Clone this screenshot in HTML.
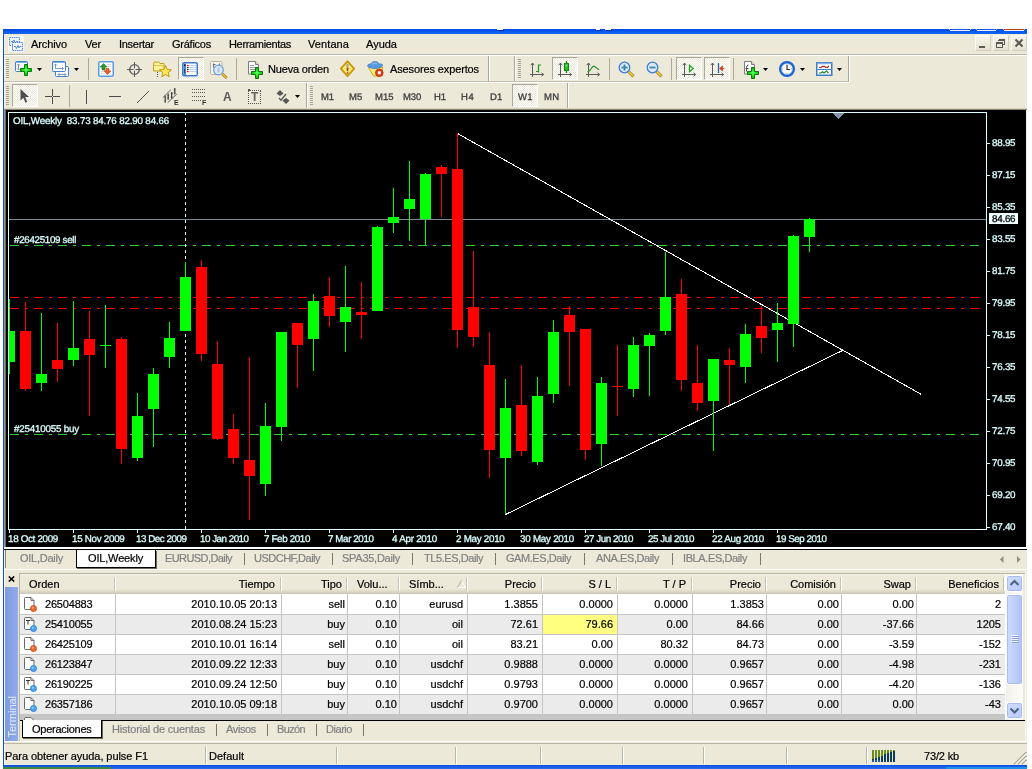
<!DOCTYPE html>
<html><head><meta charset="utf-8"><title>MetaTrader 4</title>
<style>
html,body{margin:0;padding:0;background:#fff;}
body{width:1032px;height:769px;position:relative;overflow:hidden;font-family:"Liberation Sans", sans-serif;}
#w div,#w span.t,#w svg{position:absolute;}
#w span.t{white-space:pre;font-family:"Liberation Sans", sans-serif;}
#w{will-change:transform;position:absolute;left:0;top:0;width:1032px;height:769px;overflow:hidden;}
.chk{background:repeating-conic-gradient(#fff 0 25%,#ece9d8 0 50%) 0 0/2px 2px;}
</style></head><body><div id="w">
<div style="left:3px;top:29px;width:1024px;height:740px;background:#ece9d8;"></div>
<div style="left:3px;top:29px;width:1024px;height:5px;background:linear-gradient(#0048dc,#0a5cf0 60%,#1a66f2);"></div>
<div style="left:950px;top:29px;width:20px;height:1px;background:#1450e8;"></div>
<div style="left:950px;top:30px;width:20px;height:1px;background:#f2f5ff;"></div>
<div style="left:949px;top:29px;width:1px;height:1px;background:#9db8f8;"></div>
<div style="left:970px;top:29px;width:1px;height:1px;background:#9db8f8;"></div>
<div style="left:977px;top:29px;width:19px;height:1px;background:#1450e8;"></div>
<div style="left:977px;top:30px;width:19px;height:1px;background:#f2f5ff;"></div>
<div style="left:976px;top:29px;width:1px;height:1px;background:#9db8f8;"></div>
<div style="left:996px;top:29px;width:1px;height:1px;background:#9db8f8;"></div>
<div style="left:1004px;top:29px;width:20px;height:1px;background:#b8420c;"></div>
<div style="left:1004px;top:30px;width:20px;height:1px;background:#f2f5ff;"></div>
<div style="left:1003px;top:29px;width:1px;height:1px;background:#9db8f8;"></div>
<div style="left:1024px;top:29px;width:1px;height:1px;background:#9db8f8;"></div>
<div style="left:498px;top:30px;width:6px;height:1px;background:#0a2c9c;"></div>
<div style="left:497px;top:29px;width:6px;height:1px;background:#fff;"></div>
<div style="left:597px;top:30px;width:4px;height:1px;background:#0a2c9c;"></div>
<div style="left:596px;top:29px;width:4px;height:1px;background:#fff;"></div>
<div style="left:606px;top:30px;width:6px;height:1px;background:#0a2c9c;"></div>
<div style="left:605px;top:29px;width:6px;height:1px;background:#fff;"></div>
<div style="left:3px;top:29px;width:1px;height:740px;background:#0a50e0;"></div>
<div style="left:4px;top:34px;width:1px;height:535px;background:#f4efdf;"></div>
<svg style="left:8px;top:36px" width="16" height="16" viewBox="0 0 16 16">
<rect width="16" height="16" fill="#fbfaf6"/>
<rect x="1.5" y="1.5" width="10" height="8" fill="#eef4fc" stroke="#4a86d8" stroke-dasharray="1.5 .7"/>
<path d="M3 5.5h2l1-1.5 1 3 1-1.500h2" fill="none" stroke="#5a8fd8" stroke-width="1"/>
<rect x="4.500" y="6.500" width="10" height="8" fill="#f4f8fe" stroke="#4a86d8" stroke-dasharray="1.5 .7"/>
<path d="M6 10.500h1.500l1 2 1.500-3 1 2.500 1-1.500h1.500" fill="none" stroke="#4a86d8" stroke-width="1"/>
</svg>
<span class="t" style="top:38px;font-size:11px;line-height:13px;color:#000;-webkit-text-stroke:0.200px #000;letter-spacing:-0.098px;left:31px;">Archivo</span>
<span class="t" style="top:38px;font-size:11px;line-height:13px;color:#000;-webkit-text-stroke:0.200px #000;letter-spacing:-0.172px;left:85px;">Ver</span>
<span class="t" style="top:38px;font-size:11px;line-height:13px;color:#000;-webkit-text-stroke:0.200px #000;letter-spacing:-0.287px;left:119px;">Insertar</span>
<span class="t" style="top:38px;font-size:11px;line-height:13px;color:#000;-webkit-text-stroke:0.200px #000;letter-spacing:-0.246px;left:172px;">Gráficos</span>
<span class="t" style="top:38px;font-size:11px;line-height:13px;color:#000;-webkit-text-stroke:0.200px #000;letter-spacing:-0.336px;left:229px;">Herramientas</span>
<span class="t" style="top:38px;font-size:11px;line-height:13px;color:#000;-webkit-text-stroke:0.200px #000;letter-spacing:0.089px;left:308px;">Ventana</span>
<span class="t" style="top:38px;font-size:11px;line-height:13px;color:#000;-webkit-text-stroke:0.200px #000;letter-spacing:0.000px;left:366px;">Ayuda</span>
<div style="left:975px;top:35px;width:16px;height:16px;background:linear-gradient(#f6f4ec,#e6e2d2);border:1px solid #fbfaf5;border-right-color:#d2cebc;border-bottom-color:#d2cebc;box-sizing:border-box;"></div>
<div style="left:993px;top:35px;width:16px;height:16px;background:linear-gradient(#f6f4ec,#e6e2d2);border:1px solid #fbfaf5;border-right-color:#d2cebc;border-bottom-color:#d2cebc;box-sizing:border-box;"></div>
<div style="left:1011px;top:35px;width:16px;height:16px;background:linear-gradient(#f6f4ec,#e6e2d2);border:1px solid #fbfaf5;border-right-color:#d2cebc;border-bottom-color:#d2cebc;box-sizing:border-box;"></div>
<div style="left:979px;top:46px;width:6px;height:2px;background:#5a5a52;"></div>
<svg style="left:993px;top:35px" width="16" height="16" viewBox="0 0 16 16" shape-rendering="crispEdges">
<path d="M5.500 4.500h6v5h-2" fill="none" stroke="#5a5a52"/><path d="M5 5.500h7" stroke="#5a5a52"/>
<rect x="3.500" y="7.500" width="6" height="5" fill="none" stroke="#5a5a52"/><path d="M3 8.500h7" stroke="#5a5a52"/></svg>
<svg style="left:1011px;top:35px" width="16" height="16" viewBox="0 0 16 16">
<path d="M4.500 4.500l7 7M11.500 4.500l-7 7" stroke="#5a5a52" stroke-width="2.100" fill="none"/></svg>
<div style="left:4px;top:54px;width:1023px;height:1px;background:#b9b6a5;"></div>
<div style="left:4px;top:55px;width:1023px;height:1px;background:#ffffff;"></div>
<div style="left:4px;top:81px;width:846px;height:1px;background:#c2bfae;"></div>
<div style="left:4px;top:82px;width:846px;height:1px;background:#ffffff;"></div>
<div style="left:6px;top:59px;width:3px;height:1px;background:#a7a392;"></div>
<div style="left:6px;top:61px;width:3px;height:1px;background:#a7a392;"></div>
<div style="left:6px;top:63px;width:3px;height:1px;background:#a7a392;"></div>
<div style="left:6px;top:65px;width:3px;height:1px;background:#a7a392;"></div>
<div style="left:6px;top:67px;width:3px;height:1px;background:#a7a392;"></div>
<div style="left:6px;top:69px;width:3px;height:1px;background:#a7a392;"></div>
<div style="left:6px;top:71px;width:3px;height:1px;background:#a7a392;"></div>
<div style="left:6px;top:73px;width:3px;height:1px;background:#a7a392;"></div>
<div style="left:6px;top:75px;width:3px;height:1px;background:#a7a392;"></div>
<div style="left:6px;top:77px;width:3px;height:1px;background:#a7a392;"></div>
<svg style="left:15px;top:61px" width="14" height="12" viewBox="0 0 14 12"><rect x=".5" y=".5" width="12" height="10" rx="1" fill="#fff" stroke="#3f7fd0"/><path d="M1 1.500h11" stroke="#7fb0ea"/><path d="M3.500 3v6M2 4.500l1.500-1.500 1.500 1.500M2 7.500l1.500 1.500 1.500-1.500" fill="none" stroke="#7f98b8"/></svg>
<svg style="left:20px;top:64px" width="12" height="12" viewBox="0 0 12 12"><defs><radialGradient id="pg" cx="50%" cy="50%" r="55%"><stop offset="0" stop-color="#6aff6a"/><stop offset=".45" stop-color="#22e822"/><stop offset="1" stop-color="#0c9a0c"/></radialGradient></defs><path d="M4.500 .5h3v4h4v3h-4v4h-3v-4h-4v-3h4z" fill="url(#pg)" stroke="#0b7d0b"/></svg>
<svg style="left:37px;top:68px" width="5" height="3" viewBox="0 0 5 3"><path d="M0 0h5L2.500 3z" fill="#000"/></svg>
<svg style="left:52px;top:61px" width="18" height="17" viewBox="0 0 18 17"><rect x=".5" y=".5" width="13" height="10" rx="1" fill="#fff" stroke="#3f7fd0"/><path d="M1 1.500h12" stroke="#7fb0ea"/><rect x="3.500" y="5.500" width="13" height="10" rx="1" fill="#fff" stroke="#3f7fd0"/><rect x=".5" y=".5" width="13" height="10" rx="1" fill="#fff" stroke="#3f7fd0"/><path d="M1 1.500h12" stroke="#7fb0ea"/><path d="M3.500 3v5M2 4.500l1.500-1.500 1.500 1.500M4 7.500h7.500M10 6l1.500 1.500-1.500 1.500" fill="none" stroke="#7f98b8"/><path d="M6 13.500h8M7.500 12l-1.500 1.500 1.500 1.500M12.500 12l1.500 1.500-1.500 1.500" fill="none" stroke="#7f98b8"/></svg>
<svg style="left:74px;top:68px" width="5" height="3" viewBox="0 0 5 3"><path d="M0 0h5L2.500 3z" fill="#000"/></svg>
<div style="left:88px;top:58px;width:1px;height:22px;background:#aca899;"></div>
<svg style="left:98px;top:61px" width="16" height="16" viewBox="0 0 16 16"><rect x=".75" y=".75" width="14.500" height="14.500" rx="1.500" fill="#fff" stroke="#5a9be6" stroke-width="1.500"/><path d="M9 3.500h4M9 5.500h4M3 10.500h4M3 12.500h4" stroke="#dcdcdc"/><path d="M5.500 2.500l3.500 3.500h-2v3h-3v-3h-2z" fill="#2a9a2a" stroke="#1a7a1a" stroke-width=".6"/><path d="M9.500 13.500l-3.500-3.500h2v-2.500h3v2.500h2z" fill="#e85a30" stroke="#c8401a" stroke-width=".6"/></svg>
<svg style="left:127px;top:62px" width="16" height="16" viewBox="0 0 16 16"><circle cx="7.500" cy="7.500" r="4.800" fill="none" stroke="#5c5c5c" stroke-width="1.300"/><path d="M7.500 0v15M0 7.500h15" stroke="#5c5c5c" stroke-width="1"/><rect x="6.500" y="6.500" width="2" height="2" fill="#ece9d8"/></svg>
<svg style="left:153px;top:61px" width="19" height="17" viewBox="0 0 19 17"><path d="M.5 2.500q0-1.500 1.500-1.500h3.500q1 0 1.500 1.500h4v7.500h-10.500z" fill="#fdf29a" stroke="#c89a1a"/><path d="M1 4.500h10" stroke="#e8c44a"/><rect x="4" y="11" width="1" height="1" fill="#555"/><rect x="4" y="13" width="1" height="1" fill="#555"/><rect x="4" y="15" width="1" height="1" fill="#555"/><path d="M12.500 4.500l1.700 4 4.300.3-3.300 2.800 1 4.200-3.700-2.300-3.700 2.300 1-4.200-3.300-2.800 4.300-.3z" fill="#fbe85a" stroke="#c8960f" stroke-width="1"/></svg>
<div class="chk" style="left:178px;top:57px;width:26px;height:23px;box-sizing:border-box;border:1px solid #fff;border-top-color:#aca899;border-left-color:#aca899;"></div>
<svg style="left:182px;top:62px" width="16" height="15" viewBox="0 0 16 15"><rect x=".75" y=".75" width="14.500" height="13" rx="1.500" fill="#fff" stroke="#3c7cc8" stroke-width="1.500"/><rect x="1.500" y="1.500" width="2.500" height="11.500" fill="#4a86d0"/><path d="M2.500 7v4" stroke="#444"/><path d="M6.500 3.500h7.500M6.500 5.500h7.500M6.500 7.500h7.500M6.500 9.500h7.500" stroke="#b8d0f0"/><rect x="2" y="2.500" width="1.500" height="1.500" fill="#000"/><rect x="5" y="3" width="1.500" height="1.200" fill="#f00"/><rect x="5" y="5" width="1.500" height="1.200" fill="#222"/><rect x="5" y="7" width="1.500" height="1.200" fill="#222"/><rect x="5" y="9" width="1.500" height="1.200" fill="#f00"/></svg>
<svg style="left:210px;top:61px" width="19" height="18" viewBox="0 0 19 18"><rect x=".5" y=".5" width="11.500" height="13" rx="1" fill="#f6f4ee" stroke="#b8b4a4"/><path d="M3.500 2.500v4M3.500 3.500h2M9.500 2.500v4M8 4.500h1.500" stroke="#666"/><circle cx="8.500" cy="9" r="4.800" fill="#dfe9fa" fill-opacity=".9" stroke="#6ea0e6" stroke-width="1.300"/><path d="M8.500 6.500v5" stroke="#a8c0e8" stroke-width="2"/><path d="M12.500 13l4.200 4" stroke="#a8780a" stroke-width="2.600"/><path d="M12.500 13l4 3.800" stroke="#e8c83a" stroke-width="1.200"/></svg>
<div style="left:236px;top:58px;width:1px;height:22px;background:#aca899;"></div>
<svg style="left:247px;top:61px" width="13" height="14" viewBox="0 0 13 14"><path d="M1.500 .5h7l3 3v9.500h-10z" fill="#fdfdfd" stroke="#7d7d7d"/><path d="M8.500 .5v3h3" fill="#e8e8e8" stroke="#7d7d7d"/><path d="M3 4.500h4M3 6.500h6M3 8.500h6" stroke="#9a9a9a"/></svg>
<svg style="left:251px;top:67px" width="12" height="12" viewBox="0 0 12 12"><defs><radialGradient id="pg" cx="50%" cy="50%" r="55%"><stop offset="0" stop-color="#6aff6a"/><stop offset=".45" stop-color="#22e822"/><stop offset="1" stop-color="#0c9a0c"/></radialGradient></defs><path d="M4.500 .5h3v4h4v3h-4v4h-3v-4h-4v-3h4z" fill="url(#pg)" stroke="#0b7d0b"/></svg>
<span class="t" style="top:63px;font-size:11px;line-height:13px;color:#000;-webkit-text-stroke:0.200px #000;letter-spacing:-0.182px;left:268px;">Nueva orden</span>
<svg style="left:340px;top:60px" width="16" height="18" viewBox="0 0 16 18"><path d="M7.500 1.300l6.600 7.400-6.600 7.400-6.600-7.400z" fill="#fdf27e" stroke="#c8980c" stroke-width="1.900" stroke-linejoin="round"/><path d="M3.500 8.500h8" stroke="#f0d860"/><path d="M7.500 4v3.500" stroke="#a0a0a0" stroke-width="2"/><path d="M7.500 7.500v3.700" stroke="#a83a1a" stroke-width="1.600"/><rect x="6.700" y="12.200" width="1.600" height="1.500" fill="#a83a1a"/></svg>
<svg style="left:367px;top:61px" width="18" height="17" viewBox="0 0 18 17"><path d="M1.500 6.500l5 8.500h6l3.500-8.500z" fill="#fdf07a" stroke="#d0a420"/><path d="M.8 5.500q-.8-2.500 3-2.500q1.500-3 4.500-2.500q3 .3 3.700 2.500q4-.3 3.700 1.800q-3.500 3-7.500 2.700q-4 .3-7.400-2z" fill="#5a9ae0" stroke="#3a7ac8" stroke-width=".8"/><path d="M5 3.200q2-2 5-.5" stroke="#9cc4f0" fill="none"/><circle cx="12.300" cy="11.800" r="3.800" fill="#e83a10" stroke="#b02a08" stroke-width=".8"/><rect x="10.800" y="10.300" width="3" height="3" fill="#fff"/></svg>
<span class="t" style="top:63px;font-size:11px;line-height:13px;color:#000;-webkit-text-stroke:0.200px #000;letter-spacing:-0.124px;left:390px;">Asesores expertos</span>
<div style="left:488px;top:56px;width:1px;height:25px;background:#aca899;"></div>
<div style="left:489px;top:56px;width:1px;height:25px;background:#fff;"></div>
<div style="left:514px;top:56px;width:1px;height:25px;background:#aca899;"></div>
<div style="left:515px;top:56px;width:1px;height:25px;background:#fff;"></div>
<div style="left:518px;top:59px;width:3px;height:1px;background:#a7a392;"></div>
<div style="left:518px;top:61px;width:3px;height:1px;background:#a7a392;"></div>
<div style="left:518px;top:63px;width:3px;height:1px;background:#a7a392;"></div>
<div style="left:518px;top:65px;width:3px;height:1px;background:#a7a392;"></div>
<div style="left:518px;top:67px;width:3px;height:1px;background:#a7a392;"></div>
<div style="left:518px;top:69px;width:3px;height:1px;background:#a7a392;"></div>
<div style="left:518px;top:71px;width:3px;height:1px;background:#a7a392;"></div>
<div style="left:518px;top:73px;width:3px;height:1px;background:#a7a392;"></div>
<div style="left:518px;top:75px;width:3px;height:1px;background:#a7a392;"></div>
<div style="left:518px;top:77px;width:3px;height:1px;background:#a7a392;"></div>
<svg style="left:530px;top:62px" width="16" height="16" viewBox="0 0 16 16"><path d="M2.500 1v14M0 12.500h13.500" stroke="#5a5a5a" fill="none"/><path d="M.8 3.200l1.700-2.200 1.700 2.200M11.500 10.800l2.200 1.700-2.200 1.700" fill="none" stroke="#5a5a5a"/></svg>
<svg style="left:533px;top:62px" width="12" height="12" viewBox="0 0 12 12"><path d="M5.500 2.500v8M5.500 3h2.500M3 9.500h2.500" stroke="#1a9a1a" stroke-width="1.200" fill="none"/></svg>
<div class="chk" style="left:552px;top:57px;width:26px;height:23px;box-sizing:border-box;border:1px solid #fff;border-top-color:#aca899;border-left-color:#aca899;"></div>
<svg style="left:558px;top:62px" width="16" height="16" viewBox="0 0 16 16"><path d="M2.500 1v14M0 12.500h13.500" stroke="#5a5a5a" fill="none"/><path d="M.8 3.200l1.700-2.200 1.700 2.200M11.500 10.800l2.200 1.700-2.200 1.700" fill="none" stroke="#5a5a5a"/></svg>
<svg style="left:562px;top:60px" width="10" height="14" viewBox="0 0 10 14"><path d="M4.500 1v12" stroke="#0f8c0f" stroke-width="1.200"/><rect x="2.500" y="3.500" width="4" height="7" fill="#22c022" stroke="#0f8c0f"/><rect x="3.500" y="4.500" width="2" height="2" fill="#8ad08a"/></svg>
<svg style="left:586px;top:62px" width="16" height="16" viewBox="0 0 16 16"><path d="M2.500 1v14M0 12.500h13.500" stroke="#5a5a5a" fill="none"/><path d="M.8 3.200l1.700-2.200 1.700 2.200M11.500 10.800l2.200 1.700-2.200 1.700" fill="none" stroke="#5a5a5a"/></svg>
<svg style="left:587px;top:62px" width="14" height="12" viewBox="0 0 14 12"><path d="M.5 10q3-1.500 4.500-4.500q1.500-2 3-.8l4 3" stroke="#2a9a2a" stroke-width="1.300" fill="none"/></svg>
<div style="left:609px;top:58px;width:1px;height:22px;background:#aca899;"></div>
<svg style="left:618px;top:61px" width="17" height="17" viewBox="0 0 17 17"><path d="M10.500 10.500l5 4.800" stroke="#a8780a" stroke-width="3"/><path d="M10.500 10.500l4.700 4.500" stroke="#f0d84a" stroke-width="1.500"/><circle cx="6.500" cy="6.500" r="5.300" fill="#dde9fa" stroke="#3a7cda" stroke-width="1.300"/><path d="M3.500 6.500h6" stroke="#3a86a8" stroke-width="1.800"/><path d="M6.500 3.500v6" stroke="#3a86a8" stroke-width="1.800"/></svg>
<svg style="left:646px;top:61px" width="17" height="17" viewBox="0 0 17 17"><path d="M10.500 10.500l5 4.800" stroke="#a8780a" stroke-width="3"/><path d="M10.500 10.500l4.700 4.500" stroke="#f0d84a" stroke-width="1.500"/><circle cx="6.500" cy="6.500" r="5.300" fill="#dde9fa" stroke="#3a7cda" stroke-width="1.300"/><path d="M3.500 6.500h6" stroke="#3a86a8" stroke-width="1.800"/></svg>
<div style="left:671px;top:58px;width:1px;height:22px;background:#aca899;"></div>
<div class="chk" style="left:676px;top:57px;width:26px;height:23px;box-sizing:border-box;border:1px solid #fff;border-top-color:#aca899;border-left-color:#aca899;"></div>
<svg style="left:682px;top:62px" width="16" height="16" viewBox="0 0 16 16"><path d="M2.500 1v14M0 12.500h13.500" stroke="#5a5a5a" fill="none"/><path d="M.8 3.200l1.700-2.200 1.700 2.200M11.500 10.800l2.200 1.700-2.200 1.700" fill="none" stroke="#5a5a5a"/></svg>
<svg style="left:688px;top:64px" width="7" height="9" viewBox="0 0 7 9"><path d="M1.500 1.200l3.800 3.300-3.800 3.300z" fill="none" stroke="#1aa81a" stroke-width="1.200"/></svg>
<div class="chk" style="left:704px;top:57px;width:26px;height:23px;box-sizing:border-box;border:1px solid #fff;border-top-color:#aca899;border-left-color:#aca899;"></div>
<svg style="left:710px;top:62px" width="16" height="16" viewBox="0 0 16 16"><path d="M2.500 1v14M0 12.500h13.500" stroke="#5a5a5a" fill="none"/><path d="M.8 3.200l1.700-2.200 1.700 2.200M11.500 10.800l2.200 1.700-2.200 1.700" fill="none" stroke="#5a5a5a"/></svg>
<svg style="left:717px;top:62px" width="9" height="12" viewBox="0 0 9 12"><path d="M1.500 1v10" stroke="#1a6aa8" stroke-width="1.300"/><path d="M2.500 6.500h5M5.500 4l-2.800 2.500 2.800 2.500z" stroke="#d8401a" fill="#d8401a" stroke-width=".8"/></svg>
<div style="left:733px;top:58px;width:1px;height:22px;background:#aca899;"></div>
<svg style="left:743px;top:61px" width="13" height="14" viewBox="0 0 13 14"><path d="M1.500 .5h7l3 3v9.500h-10z" fill="#fdfdfd" stroke="#7d7d7d"/><path d="M8.500 .5v3h3" fill="#e8e8e8" stroke="#7d7d7d"/><path d="M5.500 4q-2 0-2 2.500v4M2.500 7.500h3" stroke="#444" fill="none"/></svg>
<svg style="left:747px;top:67px" width="12" height="12" viewBox="0 0 12 12"><defs><radialGradient id="pg" cx="50%" cy="50%" r="55%"><stop offset="0" stop-color="#6aff6a"/><stop offset=".45" stop-color="#22e822"/><stop offset="1" stop-color="#0c9a0c"/></radialGradient></defs><path d="M4.500 .5h3v4h4v3h-4v4h-3v-4h-4v-3h4z" fill="url(#pg)" stroke="#0b7d0b"/></svg>
<svg style="left:763px;top:68px" width="5" height="3" viewBox="0 0 5 3"><path d="M0 0h5L2.500 3z" fill="#000"/></svg>
<svg style="left:779px;top:61px" width="16" height="16" viewBox="0 0 16 16"><circle cx="8" cy="8" r="6.800" fill="#fbfbfb" stroke="#1a62d2" stroke-width="2.400"/><circle cx="8" cy="8" r="5.600" fill="none" stroke="#7fb0f0" stroke-width=".6"/><path d="M8 4v4.500h3" stroke="#333" stroke-width="1.200" fill="none"/><path d="M8 3v.8M8 12.200v.8M3 8h.8M12.200 8h.8" stroke="#888"/></svg>
<svg style="left:800px;top:68px" width="5" height="3" viewBox="0 0 5 3"><path d="M0 0h5L2.500 3z" fill="#000"/></svg>
<svg style="left:816px;top:62px" width="17" height="14" viewBox="0 0 17 14"><rect x=".75" y=".75" width="15" height="12.500" fill="#fff" stroke="#3c7cc8" stroke-width="1.500"/><path d="M1 1.500h14.500" stroke="#7fb0ea" stroke-width="1.500"/><path d="M1.500 7.500h14" stroke="#3c7cc8"/><path d="M3 5.500h2l1.500-1.200h2l1 1h2l1.500-1.300" stroke="#b02a1a" stroke-width="1.200" fill="none"/><path d="M3 11h2l1.500-1.200 1.500 1.200 2.500-2 2 2" stroke="#1a8a2a" stroke-width="1.200" fill="none"/></svg>
<svg style="left:837px;top:68px" width="5" height="3" viewBox="0 0 5 3"><path d="M0 0h5L2.500 3z" fill="#000"/></svg>
<div style="left:848px;top:56px;width:1px;height:26px;background:#aca899;"></div>
<div style="left:849px;top:56px;width:1px;height:27px;background:#fff;"></div>
<div style="left:6px;top:86px;width:3px;height:1px;background:#a7a392;"></div>
<div style="left:6px;top:88px;width:3px;height:1px;background:#a7a392;"></div>
<div style="left:6px;top:90px;width:3px;height:1px;background:#a7a392;"></div>
<div style="left:6px;top:92px;width:3px;height:1px;background:#a7a392;"></div>
<div style="left:6px;top:94px;width:3px;height:1px;background:#a7a392;"></div>
<div style="left:6px;top:96px;width:3px;height:1px;background:#a7a392;"></div>
<div style="left:6px;top:98px;width:3px;height:1px;background:#a7a392;"></div>
<div style="left:6px;top:100px;width:3px;height:1px;background:#a7a392;"></div>
<div style="left:6px;top:102px;width:3px;height:1px;background:#a7a392;"></div>
<div style="left:6px;top:104px;width:3px;height:1px;background:#a7a392;"></div>
<div class="chk" style="left:12px;top:84px;width:26px;height:23px;box-sizing:border-box;border:1px solid #fff;border-top-color:#aca899;border-left-color:#aca899;"></div>
<svg style="left:19px;top:88px" width="11" height="16" viewBox="0 0 11 16"><path d="M1.500 1v11.500l2.800-2.800 2.200 5 1.800-.8-2.200-4.900h3.900z" fill="#4d4d4d"/></svg>
<div style="left:45px;top:96px;width:15px;height:1px;background:#4d4d4d;"></div>
<div style="left:52px;top:89px;width:1px;height:15px;background:#4d4d4d;"></div>
<div style="left:52px;top:96px;width:1px;height:1px;background:#ece9d8;"></div>
<div style="left:69px;top:85px;width:1px;height:22px;background:#aca899;"></div>
<div style="left:86px;top:90px;width:1px;height:14px;background:#4d4d4d;"></div>
<div style="left:109px;top:96px;width:12px;height:1px;background:#4d4d4d;"></div>
<svg style="left:136px;top:90px" width="14" height="14" viewBox="0 0 14 14"><path d="M1 13l12-12" stroke="#4d4d4d" stroke-width="1"/></svg>
<svg style="left:162px;top:88px" width="17" height="18" viewBox="0 0 17 18"><path d="M.8 9.600l8.100-7.900M5.700 14.700l9.200-8.700" stroke="#6a6a6a" stroke-width="1"/><path d="M3.200 7.400v7.300M6.200 5.500v6.200M9.700 3.900v6.800M12.700 0v6.600" stroke="#444" stroke-width="1.300"/><path d="M2.200 9h2M2.200 12.500h2M5.200 7.500h2M5.200 10h2M8.700 5.500h2M8.700 9h2M11.700 2h2M11.700 5h2" stroke="#555" stroke-width=".8"/></svg>
<span class="t" style="top:98px;font-size:7px;line-height:9px;color:#333;font-weight:bold;left:174px;">E</span>
<div style="left:192px;top:89px;width:13px;height:1px;background:repeating-linear-gradient(90deg,#555 0 1px,transparent 1px 2px);"></div>
<div style="left:192px;top:92px;width:13px;height:1px;background:repeating-linear-gradient(90deg,#555 0 1px,transparent 1px 2px);"></div>
<div style="left:192px;top:96px;width:13px;height:1px;background:repeating-linear-gradient(90deg,#555 0 1px,transparent 1px 2px);"></div>
<div style="left:192px;top:100px;width:9px;height:1px;background:repeating-linear-gradient(90deg,#555 0 1px,transparent 1px 2px);"></div>
<span class="t" style="top:98px;font-size:7px;line-height:9px;color:#333;font-weight:bold;left:202px;">F</span>
<span class="t" style="top:90px;font-size:12px;line-height:14px;color:#5a5a5a;font-weight:bold;left:223px;">A</span>
<div style="left:248px;top:90px;width:13px;height:14px;box-sizing:border-box;border:1px dotted #555;"></div>
<span class="t" style="top:90px;font-size:12px;line-height:14px;color:#666;font-weight:bold;left:251px;">T</span>
<div style="left:248px;top:89px;width:2px;height:2px;background:#555;"></div>
<svg style="left:275px;top:89px" width="16" height="16" viewBox="0 0 16 16"><path d="M5 1l3.500 3.500-3.500 2.500-3.500-2.500z" fill="#555"/><path d="M11 9l3.500 2.500-3.500 3.500-3.500-3.500z" fill="#555"/><path d="M4 9l2 2.200 5-6.200" stroke="#555" stroke-width="1.300" fill="none"/></svg>
<svg style="left:295px;top:95px" width="5" height="3" viewBox="0 0 5 3"><path d="M0 0h5L2.500 3z" fill="#000"/></svg>
<div style="left:306px;top:83px;width:1px;height:25px;background:#aca899;"></div>
<div style="left:307px;top:83px;width:1px;height:25px;background:#fff;"></div>
<div style="left:310px;top:86px;width:3px;height:1px;background:#a7a392;"></div>
<div style="left:310px;top:88px;width:3px;height:1px;background:#a7a392;"></div>
<div style="left:310px;top:90px;width:3px;height:1px;background:#a7a392;"></div>
<div style="left:310px;top:92px;width:3px;height:1px;background:#a7a392;"></div>
<div style="left:310px;top:94px;width:3px;height:1px;background:#a7a392;"></div>
<div style="left:310px;top:96px;width:3px;height:1px;background:#a7a392;"></div>
<div style="left:310px;top:98px;width:3px;height:1px;background:#a7a392;"></div>
<div style="left:310px;top:100px;width:3px;height:1px;background:#a7a392;"></div>
<div style="left:310px;top:102px;width:3px;height:1px;background:#a7a392;"></div>
<div style="left:310px;top:104px;width:3px;height:1px;background:#a7a392;"></div>
<span class="t" style="top:92px;font-size:9.5px;line-height:11.5px;color:#3c3c3c;text-rendering:geometricPrecision;-webkit-text-stroke:0.3px #3c3c3c;letter-spacing:-0.102px;left:321px;">M1</span>
<span class="t" style="top:92px;font-size:9.5px;line-height:11.5px;color:#3c3c3c;text-rendering:geometricPrecision;-webkit-text-stroke:0.3px #3c3c3c;letter-spacing:0.148px;left:349px;">M5</span>
<span class="t" style="top:92px;font-size:9.5px;line-height:11.5px;color:#3c3c3c;text-rendering:geometricPrecision;-webkit-text-stroke:0.3px #3c3c3c;letter-spacing:0.005px;left:375px;">M15</span>
<span class="t" style="top:92px;font-size:9.5px;line-height:11.5px;color:#3c3c3c;text-rendering:geometricPrecision;-webkit-text-stroke:0.3px #3c3c3c;letter-spacing:-0.161px;left:403px;">M30</span>
<span class="t" style="top:92px;font-size:9.5px;line-height:11.5px;color:#3c3c3c;text-rendering:geometricPrecision;-webkit-text-stroke:0.3px #3c3c3c;letter-spacing:-0.078px;left:434px;">H1</span>
<span class="t" style="top:92px;font-size:9.5px;line-height:11.5px;color:#3c3c3c;text-rendering:geometricPrecision;-webkit-text-stroke:0.3px #3c3c3c;letter-spacing:0.572px;left:461px;">H4</span>
<span class="t" style="top:92px;font-size:9.5px;line-height:11.5px;color:#3c3c3c;text-rendering:geometricPrecision;-webkit-text-stroke:0.3px #3c3c3c;letter-spacing:0.022px;left:490px;">D1</span>
<div class="chk" style="left:512px;top:84px;width:26px;height:23px;box-sizing:border-box;border:1px solid #fff;border-top-color:#aca899;border-left-color:#aca899;"></div>
<span class="t" style="top:92px;font-size:9.5px;line-height:11.5px;color:#3c3c3c;text-rendering:geometricPrecision;-webkit-text-stroke:0.3px #3c3c3c;letter-spacing:0.375px;left:518px;">W1</span>
<span class="t" style="top:92px;font-size:9.5px;line-height:11.5px;color:#3c3c3c;text-rendering:geometricPrecision;-webkit-text-stroke:0.3px #3c3c3c;letter-spacing:0.259px;left:544px;">MN</span>
<div style="left:567px;top:83px;width:1px;height:25px;background:#aca899;"></div>
<div style="left:568px;top:83px;width:1px;height:25px;background:#fff;"></div>
<div style="left:4px;top:108px;width:1023px;height:1px;background:#d8d4c2;"></div>
<div style="left:4px;top:109px;width:1023px;height:1px;background:#8a8672;"></div>
<div style="left:4px;top:110px;width:1px;height:437px;background:#9c9884;"></div>
<div style="left:5px;top:110px;width:1px;height:437px;background:#6e6a5c;"></div>
<div style="left:6px;top:110px;width:1020px;height:437px;background:#000;"></div>
<div style="left:1026px;top:110px;width:1px;height:437px;background:#f4f2e8;"></div>
<svg style="left:0;top:0" width="1032" height="769" viewBox="0 0 1032 769" shape-rendering="crispEdges"><rect x="9" y="219" width="977" height="1" fill="#778899"/><path d="M10 245.5H979" stroke="#32cd32" stroke-width="1" stroke-dasharray="9 6 3 6" fill="none"/><path d="M10 434.5H979" stroke="#32cd32" stroke-width="1" stroke-dasharray="9 6 3 6" fill="none"/><path d="M10 297.5H979" stroke="#ff0000" stroke-width="1" stroke-dasharray="9 6 3 6" fill="none"/><path d="M10 308.5H979" stroke="#ff0000" stroke-width="1" stroke-dasharray="9 6 3 6" fill="none"/><path d="M185.500 112V529" stroke="#dcffff" stroke-width="1" stroke-dasharray="3 3" fill="none"/><path d="M457.500 133.500L921.500 394.500" stroke="#fff" stroke-width="1" fill="none"/><path d="M505.500 514.500L842.500 350.500" stroke="#fff" stroke-width="1" fill="none"/><rect x="9" y="299" width="1" height="75" fill="#00ff00"/><rect x="9" y="331" width="6" height="31" fill="#00ff00"/><rect x="25" y="302" width="1" height="89" fill="#ff0000"/><rect x="20" y="331" width="11" height="58" fill="#ff0000"/><rect x="41" y="313" width="1" height="78" fill="#00ff00"/><rect x="36" y="374" width="11" height="9" fill="#00ff00"/><rect x="57" y="323" width="1" height="59" fill="#ff0000"/><rect x="52" y="360" width="11" height="9" fill="#ff0000"/><rect x="73" y="301" width="1" height="65" fill="#00ff00"/><rect x="68" y="348" width="11" height="12" fill="#00ff00"/><rect x="89" y="311" width="1" height="105" fill="#ff0000"/><rect x="84" y="339" width="11" height="16" fill="#ff0000"/><rect x="105" y="305" width="1" height="63" fill="#00ff00"/><rect x="100" y="345" width="11" height="1" fill="#00ff00"/><rect x="121" y="337" width="1" height="127" fill="#ff0000"/><rect x="116" y="339" width="11" height="110" fill="#ff0000"/><rect x="137" y="393" width="1" height="68" fill="#00ff00"/><rect x="132" y="416" width="11" height="42" fill="#00ff00"/><rect x="153" y="368" width="1" height="79" fill="#00ff00"/><rect x="148" y="374" width="11" height="35" fill="#00ff00"/><rect x="169" y="322" width="1" height="46" fill="#00ff00"/><rect x="164" y="338" width="11" height="19" fill="#00ff00"/><rect x="185" y="262" width="1" height="69" fill="#00ff00"/><rect x="180" y="277" width="11" height="54" fill="#00ff00"/><rect x="201" y="260" width="1" height="101" fill="#ff0000"/><rect x="196" y="267" width="11" height="87" fill="#ff0000"/><rect x="217" y="341" width="1" height="99" fill="#ff0000"/><rect x="212" y="364" width="11" height="75" fill="#ff0000"/><rect x="233" y="414" width="1" height="50" fill="#ff0000"/><rect x="228" y="429" width="11" height="29" fill="#ff0000"/><rect x="249" y="357" width="1" height="163" fill="#ff0000"/><rect x="244" y="460" width="11" height="16" fill="#ff0000"/><rect x="265" y="403" width="1" height="93" fill="#00ff00"/><rect x="260" y="426" width="11" height="58" fill="#00ff00"/><rect x="281" y="332" width="1" height="109" fill="#00ff00"/><rect x="276" y="332" width="11" height="95" fill="#00ff00"/><rect x="297" y="323" width="1" height="65" fill="#ff0000"/><rect x="292" y="323" width="11" height="22" fill="#ff0000"/><rect x="313" y="294" width="1" height="77" fill="#00ff00"/><rect x="308" y="301" width="11" height="38" fill="#00ff00"/><rect x="329" y="277" width="1" height="50" fill="#ff0000"/><rect x="324" y="296" width="11" height="20" fill="#ff0000"/><rect x="345" y="266" width="1" height="86" fill="#00ff00"/><rect x="340" y="307" width="11" height="15" fill="#00ff00"/><rect x="361" y="282" width="1" height="57" fill="#ff0000"/><rect x="356" y="312" width="11" height="3" fill="#ff0000"/><rect x="377" y="226" width="1" height="85" fill="#00ff00"/><rect x="372" y="227" width="11" height="84" fill="#00ff00"/><rect x="393" y="188" width="1" height="45" fill="#00ff00"/><rect x="388" y="217" width="11" height="6" fill="#00ff00"/><rect x="409" y="161" width="1" height="80" fill="#00ff00"/><rect x="404" y="199" width="11" height="10" fill="#00ff00"/><rect x="425" y="173" width="1" height="72" fill="#00ff00"/><rect x="420" y="174" width="11" height="45" fill="#00ff00"/><rect x="441" y="165" width="1" height="52" fill="#ff0000"/><rect x="436" y="167" width="11" height="7" fill="#ff0000"/><rect x="457" y="133" width="1" height="215" fill="#ff0000"/><rect x="452" y="169" width="11" height="161" fill="#ff0000"/><rect x="473" y="251" width="1" height="96" fill="#ff0000"/><rect x="468" y="307" width="11" height="30" fill="#ff0000"/><rect x="489" y="332" width="1" height="146" fill="#ff0000"/><rect x="484" y="365" width="11" height="85" fill="#ff0000"/><rect x="505" y="379" width="1" height="135" fill="#00ff00"/><rect x="500" y="408" width="11" height="50" fill="#00ff00"/><rect x="521" y="365" width="1" height="91" fill="#ff0000"/><rect x="516" y="405" width="11" height="46" fill="#ff0000"/><rect x="537" y="377" width="1" height="88" fill="#00ff00"/><rect x="532" y="396" width="11" height="66" fill="#00ff00"/><rect x="553" y="320" width="1" height="83" fill="#00ff00"/><rect x="548" y="332" width="11" height="62" fill="#00ff00"/><rect x="569" y="306" width="1" height="80" fill="#ff0000"/><rect x="564" y="315" width="11" height="17" fill="#ff0000"/><rect x="585" y="329" width="1" height="131" fill="#ff0000"/><rect x="580" y="329" width="11" height="121" fill="#ff0000"/><rect x="601" y="377" width="1" height="89" fill="#00ff00"/><rect x="596" y="383" width="11" height="61" fill="#00ff00"/><rect x="617" y="345" width="1" height="71" fill="#ff0000"/><rect x="612" y="386" width="11" height="1" fill="#ff0000"/><rect x="633" y="337" width="1" height="60" fill="#00ff00"/><rect x="628" y="345" width="11" height="44" fill="#00ff00"/><rect x="649" y="333" width="1" height="63" fill="#00ff00"/><rect x="644" y="335" width="11" height="11" fill="#00ff00"/><rect x="665" y="252" width="1" height="83" fill="#00ff00"/><rect x="660" y="297" width="11" height="34" fill="#00ff00"/><rect x="681" y="279" width="1" height="112" fill="#ff0000"/><rect x="676" y="294" width="11" height="86" fill="#ff0000"/><rect x="697" y="345" width="1" height="66" fill="#ff0000"/><rect x="692" y="383" width="11" height="20" fill="#ff0000"/><rect x="713" y="359" width="1" height="92" fill="#00ff00"/><rect x="708" y="359" width="11" height="42" fill="#00ff00"/><rect x="729" y="348" width="1" height="57" fill="#ff0000"/><rect x="724" y="360" width="11" height="5" fill="#ff0000"/><rect x="745" y="324" width="1" height="59" fill="#00ff00"/><rect x="740" y="334" width="11" height="33" fill="#00ff00"/><rect x="761" y="306" width="1" height="47" fill="#ff0000"/><rect x="756" y="326" width="11" height="12" fill="#ff0000"/><rect x="777" y="303" width="1" height="59" fill="#00ff00"/><rect x="772" y="323" width="11" height="7" fill="#00ff00"/><rect x="793" y="235" width="1" height="112" fill="#00ff00"/><rect x="788" y="236" width="11" height="88" fill="#00ff00"/><rect x="809" y="218" width="1" height="34" fill="#00ff00"/><rect x="804" y="219" width="11" height="18" fill="#00ff00"/><path d="M8.500 112.500H986.500V529.500H8.500z" stroke="#dcffff" fill="none"/><path d="M833 113h11l-5.500 6z" fill="#8492ae"/><rect x="987" y="143" width="3" height="1" fill="#dcffff"/><rect x="987" y="175" width="3" height="1" fill="#dcffff"/><rect x="987" y="207" width="3" height="1" fill="#dcffff"/><rect x="987" y="239" width="3" height="1" fill="#dcffff"/><rect x="987" y="271" width="3" height="1" fill="#dcffff"/><rect x="987" y="303" width="3" height="1" fill="#dcffff"/><rect x="987" y="335" width="3" height="1" fill="#dcffff"/><rect x="987" y="367" width="3" height="1" fill="#dcffff"/><rect x="987" y="399" width="3" height="1" fill="#dcffff"/><rect x="987" y="431" width="3" height="1" fill="#dcffff"/><rect x="987" y="463" width="3" height="1" fill="#dcffff"/><rect x="987" y="495" width="3" height="1" fill="#dcffff"/><rect x="987" y="527" width="3" height="1" fill="#dcffff"/><rect x="9" y="530" width="1" height="3" fill="#dcffff"/><rect x="73" y="530" width="1" height="3" fill="#dcffff"/><rect x="137" y="530" width="1" height="3" fill="#dcffff"/><rect x="201" y="530" width="1" height="3" fill="#dcffff"/><rect x="265" y="530" width="1" height="3" fill="#dcffff"/><rect x="329" y="530" width="1" height="3" fill="#dcffff"/><rect x="393" y="530" width="1" height="3" fill="#dcffff"/><rect x="457" y="530" width="1" height="3" fill="#dcffff"/><rect x="521" y="530" width="1" height="3" fill="#dcffff"/><rect x="585" y="530" width="1" height="3" fill="#dcffff"/><rect x="649" y="530" width="1" height="3" fill="#dcffff"/><rect x="713" y="530" width="1" height="3" fill="#dcffff"/><rect x="777" y="530" width="1" height="3" fill="#dcffff"/><rect x="989" y="213" width="29" height="11" fill="#f0ffff"/></svg>
<span class="t" style="top:116px;font-size:9.8px;line-height:11.8px;color:#dcffff;text-rendering:geometricPrecision;-webkit-text-stroke:0.3px #dcffff;letter-spacing:-0.175px;left:13px;">OIL,Weekly  83.73 84.76 82.90 84.66</span>
<span class="t" style="top:235px;font-size:9.8px;line-height:11.8px;color:#dcffff;text-rendering:geometricPrecision;-webkit-text-stroke:0.3px #dcffff;letter-spacing:-0.319px;left:14px;">#26425109 sell</span>
<span class="t" style="top:424px;font-size:9.8px;line-height:11.8px;color:#dcffff;text-rendering:geometricPrecision;-webkit-text-stroke:0.3px #dcffff;letter-spacing:-0.197px;left:14px;">#25410055 buy</span>
<span class="t" style="top:138px;font-size:9.8px;line-height:11.8px;color:#dcffff;text-rendering:geometricPrecision;-webkit-text-stroke:0.3px #dcffff;letter-spacing:-0.246px;left:992px;">88.95</span>
<span class="t" style="top:170px;font-size:9.8px;line-height:11.8px;color:#dcffff;text-rendering:geometricPrecision;-webkit-text-stroke:0.3px #dcffff;letter-spacing:-0.246px;left:992px;">87.15</span>
<span class="t" style="top:202px;font-size:9.8px;line-height:11.8px;color:#dcffff;text-rendering:geometricPrecision;-webkit-text-stroke:0.3px #dcffff;letter-spacing:-0.246px;left:992px;">85.35</span>
<span class="t" style="top:234px;font-size:9.8px;line-height:11.8px;color:#dcffff;text-rendering:geometricPrecision;-webkit-text-stroke:0.3px #dcffff;letter-spacing:-0.246px;left:992px;">83.55</span>
<span class="t" style="top:266px;font-size:9.8px;line-height:11.8px;color:#dcffff;text-rendering:geometricPrecision;-webkit-text-stroke:0.3px #dcffff;letter-spacing:-0.246px;left:992px;">81.75</span>
<span class="t" style="top:298px;font-size:9.8px;line-height:11.8px;color:#dcffff;text-rendering:geometricPrecision;-webkit-text-stroke:0.3px #dcffff;letter-spacing:-0.246px;left:992px;">79.95</span>
<span class="t" style="top:330px;font-size:9.8px;line-height:11.8px;color:#dcffff;text-rendering:geometricPrecision;-webkit-text-stroke:0.3px #dcffff;letter-spacing:-0.246px;left:992px;">78.15</span>
<span class="t" style="top:362px;font-size:9.8px;line-height:11.8px;color:#dcffff;text-rendering:geometricPrecision;-webkit-text-stroke:0.3px #dcffff;letter-spacing:-0.246px;left:992px;">76.35</span>
<span class="t" style="top:394px;font-size:9.8px;line-height:11.8px;color:#dcffff;text-rendering:geometricPrecision;-webkit-text-stroke:0.3px #dcffff;letter-spacing:-0.246px;left:992px;">74.55</span>
<span class="t" style="top:426px;font-size:9.8px;line-height:11.8px;color:#dcffff;text-rendering:geometricPrecision;-webkit-text-stroke:0.3px #dcffff;letter-spacing:-0.246px;left:992px;">72.75</span>
<span class="t" style="top:458px;font-size:9.8px;line-height:11.8px;color:#dcffff;text-rendering:geometricPrecision;-webkit-text-stroke:0.3px #dcffff;letter-spacing:-0.246px;left:992px;">70.95</span>
<span class="t" style="top:490px;font-size:9.8px;line-height:11.8px;color:#dcffff;text-rendering:geometricPrecision;-webkit-text-stroke:0.3px #dcffff;letter-spacing:-0.246px;left:992px;">69.20</span>
<span class="t" style="top:522px;font-size:9.8px;line-height:11.8px;color:#dcffff;text-rendering:geometricPrecision;-webkit-text-stroke:0.3px #dcffff;letter-spacing:-0.246px;left:992px;">67.40</span>
<span class="t" style="top:214px;font-size:9.8px;line-height:11.8px;color:#000;text-rendering:geometricPrecision;-webkit-text-stroke:0.3px #000;letter-spacing:-0.246px;left:992px;">84.66</span>
<span class="t" style="top:534px;font-size:9.8px;line-height:11.8px;color:#dcffff;text-rendering:geometricPrecision;-webkit-text-stroke:0.3px #dcffff;letter-spacing:-0.308px;left:8px;">18 Oct 2009</span>
<span class="t" style="top:534px;font-size:9.8px;line-height:11.8px;color:#dcffff;text-rendering:geometricPrecision;-webkit-text-stroke:0.3px #dcffff;letter-spacing:-0.278px;left:72px;">15 Nov 2009</span>
<span class="t" style="top:534px;font-size:9.8px;line-height:11.8px;color:#dcffff;text-rendering:geometricPrecision;-webkit-text-stroke:0.3px #dcffff;letter-spacing:-0.460px;left:136px;">13 Dec 2009</span>
<span class="t" style="top:534px;font-size:9.8px;line-height:11.8px;color:#dcffff;text-rendering:geometricPrecision;-webkit-text-stroke:0.3px #dcffff;letter-spacing:-0.494px;left:200px;">10 Jan 2010</span>
<span class="t" style="top:534px;font-size:9.8px;line-height:11.8px;color:#dcffff;text-rendering:geometricPrecision;-webkit-text-stroke:0.3px #dcffff;letter-spacing:-0.358px;left:264px;">7 Feb 2010</span>
<span class="t" style="top:534px;font-size:9.8px;line-height:11.8px;color:#dcffff;text-rendering:geometricPrecision;-webkit-text-stroke:0.3px #dcffff;letter-spacing:-0.406px;left:328px;">7 Mar 2010</span>
<span class="t" style="top:534px;font-size:9.8px;line-height:11.8px;color:#dcffff;text-rendering:geometricPrecision;-webkit-text-stroke:0.3px #dcffff;letter-spacing:-0.241px;left:392px;">4 Apr 2010</span>
<span class="t" style="top:534px;font-size:9.8px;line-height:11.8px;color:#dcffff;text-rendering:geometricPrecision;-webkit-text-stroke:0.3px #dcffff;letter-spacing:-0.270px;left:456px;">2 May 2010</span>
<span class="t" style="top:534px;font-size:9.8px;line-height:11.8px;color:#dcffff;text-rendering:geometricPrecision;-webkit-text-stroke:0.3px #dcffff;letter-spacing:-0.241px;left:520px;">30 May 2010</span>
<span class="t" style="top:534px;font-size:9.8px;line-height:11.8px;color:#dcffff;text-rendering:geometricPrecision;-webkit-text-stroke:0.3px #dcffff;letter-spacing:-0.449px;left:584px;">27 Jun 2010</span>
<span class="t" style="top:534px;font-size:9.8px;line-height:11.8px;color:#dcffff;text-rendering:geometricPrecision;-webkit-text-stroke:0.3px #dcffff;letter-spacing:-0.425px;left:648px;">25 Jul 2010</span>
<span class="t" style="top:534px;font-size:9.8px;line-height:11.8px;color:#dcffff;text-rendering:geometricPrecision;-webkit-text-stroke:0.3px #dcffff;letter-spacing:-0.276px;left:712px;">22 Aug 2010</span>
<span class="t" style="top:534px;font-size:9.8px;line-height:11.8px;color:#dcffff;text-rendering:geometricPrecision;-webkit-text-stroke:0.3px #dcffff;letter-spacing:-0.462px;left:776px;">19 Sep 2010</span>
<div style="left:4px;top:547px;width:1023px;height:1px;background:#fff;"></div>
<div style="left:4px;top:548px;width:1023px;height:1px;background:#fff;"></div>
<div style="left:4px;top:549px;width:1023px;height:1px;background:#000;"></div>
<div style="left:5px;top:550px;width:1px;height:18px;background:#8a8672;"></div>
<span class="t" style="top:552px;font-size:11px;line-height:13px;color:#808080;-webkit-text-stroke:0.200px #808080;letter-spacing:-0.250px;left:20px;">OIL,Daily</span>
<div style="left:76px;top:550px;width:80px;height:18px;background:#fff;box-sizing:border-box;border:1px solid #000;border-top:none;box-shadow:1px 1px 0 #6a675c;"></div>
<span class="t" style="top:552px;font-size:11px;line-height:13px;color:#000;-webkit-text-stroke:0.200px #000;letter-spacing:-0.166px;left:88px;">OIL,Weekly</span>
<span class="t" style="top:552px;font-size:11px;line-height:13px;color:#808080;-webkit-text-stroke:0.200px #808080;letter-spacing:-0.581px;left:165px;">EURUSD,Daily</span>
<span class="t" style="top:552px;font-size:11px;line-height:13px;color:#808080;-webkit-text-stroke:0.200px #808080;letter-spacing:-0.510px;left:254px;">USDCHF,Daily</span>
<span class="t" style="top:552px;font-size:11px;line-height:13px;color:#808080;-webkit-text-stroke:0.200px #808080;letter-spacing:-0.267px;left:342px;">SPA35,Daily</span>
<span class="t" style="top:552px;font-size:11px;line-height:13px;color:#808080;-webkit-text-stroke:0.200px #808080;letter-spacing:-0.434px;left:424px;">TL5.ES,Daily</span>
<span class="t" style="top:552px;font-size:11px;line-height:13px;color:#808080;-webkit-text-stroke:0.200px #808080;letter-spacing:-0.441px;left:506px;">GAM.ES,Daily</span>
<span class="t" style="top:552px;font-size:11px;line-height:13px;color:#808080;-webkit-text-stroke:0.200px #808080;letter-spacing:-0.405px;left:596px;">ANA.ES,Daily</span>
<span class="t" style="top:552px;font-size:11px;line-height:13px;color:#808080;-webkit-text-stroke:0.200px #808080;letter-spacing:-0.392px;left:683px;">IBLA.ES,Daily</span>
<div style="left:244px;top:553px;width:1px;height:12px;background:#7a776a;"></div>
<div style="left:332px;top:553px;width:1px;height:12px;background:#7a776a;"></div>
<div style="left:412px;top:553px;width:1px;height:12px;background:#7a776a;"></div>
<div style="left:495px;top:553px;width:1px;height:12px;background:#7a776a;"></div>
<div style="left:584px;top:553px;width:1px;height:12px;background:#7a776a;"></div>
<div style="left:672px;top:553px;width:1px;height:12px;background:#7a776a;"></div>
<div style="left:760px;top:553px;width:1px;height:12px;background:#7a776a;"></div>
<svg style="left:1000px;top:556px" width="4" height="7" viewBox="0 0 4 7"><path d="M3.500 0v7l-3.500-3.500z" fill="#8f8d86"/></svg>
<svg style="left:1017px;top:556px" width="4" height="7" viewBox="0 0 4 7"><path d="M0 0v7l3.500-3.500z" fill="#8f8d86"/></svg>
<div style="left:4px;top:569px;width:1023px;height:1px;background:#fff;"></div>
<svg style="left:8px;top:576px" width="7" height="6" viewBox="0 0 7 6"><path d="M.8 .5l5.400 5M6.200 .5l-5.400 5" stroke="#000" stroke-width="1.600"/></svg>
<div style="left:5px;top:587px;width:13px;height:154px;background:linear-gradient(90deg,#7d9be2,#91abea);"></div>
<span class="t" style="left:-8px;top:711px;width:40px;font-size:11px;line-height:13px;color:#e4ecfb;transform:rotate(-90deg);transform-origin:50% 50%;text-align:left;">Terminal</span>
<div style="left:19px;top:573px;width:987px;height:147px;background:#fff;"></div>
<div style="left:19px;top:573px;width:1px;height:147px;background:#b8b4a2;"></div>
<div style="left:19px;top:720px;width:1px;height:21px;background:#c9c6b5;"></div>
<div style="left:4px;top:569px;width:1px;height:196px;background:#fbf8ef;"></div>
<div style="left:19px;top:573px;width:1006px;height:1px;background:#b8b4a2;"></div>
<div style="left:20px;top:574px;width:985px;height:20px;background:linear-gradient(#f4f2e6 0,#ece9d8 12%,#ebe8d7 75%,#dcd8c4 88%,#cbc7b8 100%);"></div>
<div style="left:114px;top:577px;width:1px;height:14px;background:#c5c2b2;"></div>
<div style="left:115px;top:577px;width:1px;height:14px;background:#fff;"></div>
<div style="left:280px;top:577px;width:1px;height:14px;background:#c5c2b2;"></div>
<div style="left:281px;top:577px;width:1px;height:14px;background:#fff;"></div>
<div style="left:346px;top:577px;width:1px;height:14px;background:#c5c2b2;"></div>
<div style="left:347px;top:577px;width:1px;height:14px;background:#fff;"></div>
<div style="left:398px;top:577px;width:1px;height:14px;background:#c5c2b2;"></div>
<div style="left:399px;top:577px;width:1px;height:14px;background:#fff;"></div>
<div style="left:466px;top:577px;width:1px;height:14px;background:#c5c2b2;"></div>
<div style="left:467px;top:577px;width:1px;height:14px;background:#fff;"></div>
<div style="left:541px;top:577px;width:1px;height:14px;background:#c5c2b2;"></div>
<div style="left:542px;top:577px;width:1px;height:14px;background:#fff;"></div>
<div style="left:616px;top:577px;width:1px;height:14px;background:#c5c2b2;"></div>
<div style="left:617px;top:577px;width:1px;height:14px;background:#fff;"></div>
<div style="left:691px;top:577px;width:1px;height:14px;background:#c5c2b2;"></div>
<div style="left:692px;top:577px;width:1px;height:14px;background:#fff;"></div>
<div style="left:765px;top:577px;width:1px;height:14px;background:#c5c2b2;"></div>
<div style="left:766px;top:577px;width:1px;height:14px;background:#fff;"></div>
<div style="left:840px;top:577px;width:1px;height:14px;background:#c5c2b2;"></div>
<div style="left:841px;top:577px;width:1px;height:14px;background:#fff;"></div>
<div style="left:915px;top:577px;width:1px;height:14px;background:#c5c2b2;"></div>
<div style="left:916px;top:577px;width:1px;height:14px;background:#fff;"></div>
<div style="left:1003px;top:577px;width:1px;height:14px;background:#c5c2b2;"></div>
<div style="left:1004px;top:577px;width:1px;height:14px;background:#fff;"></div>
<span class="t" style="top:578px;font-size:11px;line-height:13px;color:#000;-webkit-text-stroke:0.200px #000;left:29px;">Orden</span>
<span class="t" style="top:578px;font-size:11px;line-height:13px;color:#000;-webkit-text-stroke:0.200px #000;right:757px;">Tiempo</span>
<span class="t" style="top:578px;font-size:11px;line-height:13px;color:#000;-webkit-text-stroke:0.200px #000;right:690px;">Tipo</span>
<span class="t" style="top:578px;font-size:11px;line-height:13px;color:#000;-webkit-text-stroke:0.200px #000;right:496px;">Precio</span>
<span class="t" style="top:578px;font-size:11px;line-height:13px;color:#000;-webkit-text-stroke:0.200px #000;right:421px;">S / L</span>
<span class="t" style="top:578px;font-size:11px;line-height:13px;color:#000;-webkit-text-stroke:0.200px #000;right:346px;">T / P</span>
<span class="t" style="top:578px;font-size:11px;line-height:13px;color:#000;-webkit-text-stroke:0.200px #000;right:271px;">Precio</span>
<span class="t" style="top:578px;font-size:11px;line-height:13px;color:#000;-webkit-text-stroke:0.200px #000;right:196px;">Comisión</span>
<span class="t" style="top:578px;font-size:11px;line-height:13px;color:#000;-webkit-text-stroke:0.200px #000;right:121px;">Swap</span>
<span class="t" style="top:578px;font-size:11px;line-height:13px;color:#000;-webkit-text-stroke:0.200px #000;right:33px;">Beneficios</span>
<span class="t" style="top:578px;font-size:11px;line-height:13px;color:#000;-webkit-text-stroke:0.200px #000;left:357px;">Volu...</span>
<span class="t" style="top:578px;font-size:11px;line-height:13px;color:#000;-webkit-text-stroke:0.200px #000;left:409px;">Símb...</span>
<svg style="left:457px;top:580px" width="9" height="8" viewBox="0 0 9 8"><path d="M4.500 .5l4 7h-8z" fill="#ece9d8" stroke="#fff"/><path d="M4.500 .5l-4 7" stroke="#aca899" fill="none"/></svg>
<div style="left:20px;top:614px;width:985px;height:1px;background:#c4c4c4;"></div>
<svg style="left:23px;top:597px" width="15" height="16" viewBox="0 0 15 16"><path d="M1.500 1.500q0-1 1-1h5.500l3 3v8q0 1-1 1h-7.500q-1 0-1-1z" fill="#fff" stroke="#6a6a6a"/><path d="M8 .5v3h3" fill="none" stroke="#6a6a6a"/><circle cx="10.500" cy="11.500" r="3" fill="#f06a2a" stroke="#c8400a" stroke-width=".8"/><circle cx="9.800" cy="10.700" r="1" fill="#fff" opacity=".5"/></svg>
<span class="t" style="top:598px;font-size:11px;line-height:13px;color:#000;-webkit-text-stroke:0.200px #000;letter-spacing:-0.182px;left:45px;">26504883</span>
<span class="t" style="top:598px;font-size:11px;line-height:13px;color:#000;-webkit-text-stroke:0.200px #000;right:755px;">2010.10.05 20:13</span>
<span class="t" style="top:598px;font-size:11px;line-height:13px;color:#000;-webkit-text-stroke:0.200px #000;right:687px;">sell</span>
<span class="t" style="top:598px;font-size:11px;line-height:13px;color:#000;-webkit-text-stroke:0.200px #000;right:635px;">0.10</span>
<span class="t" style="top:598px;font-size:11px;line-height:13px;color:#000;-webkit-text-stroke:0.200px #000;right:569px;">eurusd</span>
<span class="t" style="top:598px;font-size:11px;line-height:13px;color:#000;-webkit-text-stroke:0.200px #000;right:494px;">1.3855</span>
<span class="t" style="top:598px;font-size:11px;line-height:13px;color:#000;-webkit-text-stroke:0.200px #000;right:419px;">0.0000</span>
<span class="t" style="top:598px;font-size:11px;line-height:13px;color:#000;-webkit-text-stroke:0.200px #000;right:344px;">0.0000</span>
<span class="t" style="top:598px;font-size:11px;line-height:13px;color:#000;-webkit-text-stroke:0.200px #000;right:268px;">1.3853</span>
<span class="t" style="top:598px;font-size:11px;line-height:13px;color:#000;-webkit-text-stroke:0.200px #000;right:193px;">0.00</span>
<span class="t" style="top:598px;font-size:11px;line-height:13px;color:#000;-webkit-text-stroke:0.200px #000;right:118px;">0.00</span>
<span class="t" style="top:598px;font-size:11px;line-height:13px;color:#000;-webkit-text-stroke:0.200px #000;right:31px;">2</span>
<div style="left:20px;top:615px;width:985px;height:19px;background:#ebebeb;"></div>
<div style="left:543px;top:615px;width:74px;height:19px;background:#ffff80;"></div>
<div style="left:20px;top:634px;width:985px;height:1px;background:#c4c4c4;"></div>
<svg style="left:23px;top:617px" width="15" height="16" viewBox="0 0 15 16"><path d="M1.500 1.500q0-1 1-1h5.500l3 3v8q0 1-1 1h-7.500q-1 0-1-1z" fill="#fff" stroke="#6a6a6a"/><path d="M8 .5v3h3" fill="none" stroke="#6a6a6a"/><path d="M3 3.500h4M5 3.500v4" stroke="#333" stroke-width="1" fill="none"/><circle cx="10.500" cy="11.500" r="3" fill="#4aa8f0" stroke="#1a78d8" stroke-width=".8"/><circle cx="9.800" cy="10.700" r="1" fill="#fff" opacity=".5"/></svg>
<span class="t" style="top:618px;font-size:11px;line-height:13px;color:#000;-webkit-text-stroke:0.200px #000;letter-spacing:-0.182px;left:45px;">25410055</span>
<span class="t" style="top:618px;font-size:11px;line-height:13px;color:#000;-webkit-text-stroke:0.200px #000;right:755px;">2010.08.24 15:23</span>
<span class="t" style="top:618px;font-size:11px;line-height:13px;color:#000;-webkit-text-stroke:0.200px #000;right:687px;">buy</span>
<span class="t" style="top:618px;font-size:11px;line-height:13px;color:#000;-webkit-text-stroke:0.200px #000;right:635px;">0.10</span>
<span class="t" style="top:618px;font-size:11px;line-height:13px;color:#000;-webkit-text-stroke:0.200px #000;right:569px;">oil</span>
<span class="t" style="top:618px;font-size:11px;line-height:13px;color:#000;-webkit-text-stroke:0.200px #000;right:494px;">72.61</span>
<span class="t" style="top:618px;font-size:11px;line-height:13px;color:#000;-webkit-text-stroke:0.200px #000;right:419px;">79.66</span>
<span class="t" style="top:618px;font-size:11px;line-height:13px;color:#000;-webkit-text-stroke:0.200px #000;right:344px;">0.00</span>
<span class="t" style="top:618px;font-size:11px;line-height:13px;color:#000;-webkit-text-stroke:0.200px #000;right:268px;">84.66</span>
<span class="t" style="top:618px;font-size:11px;line-height:13px;color:#000;-webkit-text-stroke:0.200px #000;right:193px;">0.00</span>
<span class="t" style="top:618px;font-size:11px;line-height:13px;color:#000;-webkit-text-stroke:0.200px #000;right:118px;">-37.66</span>
<span class="t" style="top:618px;font-size:11px;line-height:13px;color:#000;-webkit-text-stroke:0.200px #000;right:31px;">1205</span>
<div style="left:20px;top:654px;width:985px;height:1px;background:#c4c4c4;"></div>
<svg style="left:23px;top:637px" width="15" height="16" viewBox="0 0 15 16"><path d="M1.500 1.500q0-1 1-1h5.500l3 3v8q0 1-1 1h-7.500q-1 0-1-1z" fill="#fff" stroke="#6a6a6a"/><path d="M8 .5v3h3" fill="none" stroke="#6a6a6a"/><circle cx="10.500" cy="11.500" r="3" fill="#f06a2a" stroke="#c8400a" stroke-width=".8"/><circle cx="9.800" cy="10.700" r="1" fill="#fff" opacity=".5"/></svg>
<span class="t" style="top:638px;font-size:11px;line-height:13px;color:#000;-webkit-text-stroke:0.200px #000;letter-spacing:-0.182px;left:45px;">26425109</span>
<span class="t" style="top:638px;font-size:11px;line-height:13px;color:#000;-webkit-text-stroke:0.200px #000;right:755px;">2010.10.01 16:14</span>
<span class="t" style="top:638px;font-size:11px;line-height:13px;color:#000;-webkit-text-stroke:0.200px #000;right:687px;">sell</span>
<span class="t" style="top:638px;font-size:11px;line-height:13px;color:#000;-webkit-text-stroke:0.200px #000;right:635px;">0.10</span>
<span class="t" style="top:638px;font-size:11px;line-height:13px;color:#000;-webkit-text-stroke:0.200px #000;right:569px;">oil</span>
<span class="t" style="top:638px;font-size:11px;line-height:13px;color:#000;-webkit-text-stroke:0.200px #000;right:494px;">83.21</span>
<span class="t" style="top:638px;font-size:11px;line-height:13px;color:#000;-webkit-text-stroke:0.200px #000;right:419px;">0.00</span>
<span class="t" style="top:638px;font-size:11px;line-height:13px;color:#000;-webkit-text-stroke:0.200px #000;right:344px;">80.32</span>
<span class="t" style="top:638px;font-size:11px;line-height:13px;color:#000;-webkit-text-stroke:0.200px #000;right:268px;">84.73</span>
<span class="t" style="top:638px;font-size:11px;line-height:13px;color:#000;-webkit-text-stroke:0.200px #000;right:193px;">0.00</span>
<span class="t" style="top:638px;font-size:11px;line-height:13px;color:#000;-webkit-text-stroke:0.200px #000;right:118px;">-3.59</span>
<span class="t" style="top:638px;font-size:11px;line-height:13px;color:#000;-webkit-text-stroke:0.200px #000;right:31px;">-152</span>
<div style="left:20px;top:655px;width:985px;height:19px;background:#ebebeb;"></div>
<div style="left:20px;top:674px;width:985px;height:1px;background:#c4c4c4;"></div>
<svg style="left:23px;top:657px" width="15" height="16" viewBox="0 0 15 16"><path d="M1.500 1.500q0-1 1-1h5.500l3 3v8q0 1-1 1h-7.500q-1 0-1-1z" fill="#fff" stroke="#6a6a6a"/><path d="M8 .5v3h3" fill="none" stroke="#6a6a6a"/><circle cx="10.500" cy="11.500" r="3" fill="#4aa8f0" stroke="#1a78d8" stroke-width=".8"/><circle cx="9.800" cy="10.700" r="1" fill="#fff" opacity=".5"/></svg>
<span class="t" style="top:658px;font-size:11px;line-height:13px;color:#000;-webkit-text-stroke:0.200px #000;letter-spacing:-0.182px;left:45px;">26123847</span>
<span class="t" style="top:658px;font-size:11px;line-height:13px;color:#000;-webkit-text-stroke:0.200px #000;right:755px;">2010.09.22 12:33</span>
<span class="t" style="top:658px;font-size:11px;line-height:13px;color:#000;-webkit-text-stroke:0.200px #000;right:687px;">buy</span>
<span class="t" style="top:658px;font-size:11px;line-height:13px;color:#000;-webkit-text-stroke:0.200px #000;right:635px;">0.10</span>
<span class="t" style="top:658px;font-size:11px;line-height:13px;color:#000;-webkit-text-stroke:0.200px #000;right:569px;">usdchf</span>
<span class="t" style="top:658px;font-size:11px;line-height:13px;color:#000;-webkit-text-stroke:0.200px #000;right:494px;">0.9888</span>
<span class="t" style="top:658px;font-size:11px;line-height:13px;color:#000;-webkit-text-stroke:0.200px #000;right:419px;">0.0000</span>
<span class="t" style="top:658px;font-size:11px;line-height:13px;color:#000;-webkit-text-stroke:0.200px #000;right:344px;">0.0000</span>
<span class="t" style="top:658px;font-size:11px;line-height:13px;color:#000;-webkit-text-stroke:0.200px #000;right:268px;">0.9657</span>
<span class="t" style="top:658px;font-size:11px;line-height:13px;color:#000;-webkit-text-stroke:0.200px #000;right:193px;">0.00</span>
<span class="t" style="top:658px;font-size:11px;line-height:13px;color:#000;-webkit-text-stroke:0.200px #000;right:118px;">-4.98</span>
<span class="t" style="top:658px;font-size:11px;line-height:13px;color:#000;-webkit-text-stroke:0.200px #000;right:31px;">-231</span>
<div style="left:20px;top:694px;width:985px;height:1px;background:#c4c4c4;"></div>
<svg style="left:23px;top:677px" width="15" height="16" viewBox="0 0 15 16"><path d="M1.500 1.500q0-1 1-1h5.500l3 3v8q0 1-1 1h-7.500q-1 0-1-1z" fill="#fff" stroke="#6a6a6a"/><path d="M8 .5v3h3" fill="none" stroke="#6a6a6a"/><path d="M3 3.500h4M5 3.500v4" stroke="#333" stroke-width="1" fill="none"/><circle cx="10.500" cy="11.500" r="3" fill="#4aa8f0" stroke="#1a78d8" stroke-width=".8"/><circle cx="9.800" cy="10.700" r="1" fill="#fff" opacity=".5"/></svg>
<span class="t" style="top:678px;font-size:11px;line-height:13px;color:#000;-webkit-text-stroke:0.200px #000;letter-spacing:-0.182px;left:45px;">26190225</span>
<span class="t" style="top:678px;font-size:11px;line-height:13px;color:#000;-webkit-text-stroke:0.200px #000;right:755px;">2010.09.24 12:50</span>
<span class="t" style="top:678px;font-size:11px;line-height:13px;color:#000;-webkit-text-stroke:0.200px #000;right:687px;">buy</span>
<span class="t" style="top:678px;font-size:11px;line-height:13px;color:#000;-webkit-text-stroke:0.200px #000;right:635px;">0.10</span>
<span class="t" style="top:678px;font-size:11px;line-height:13px;color:#000;-webkit-text-stroke:0.200px #000;right:569px;">usdchf</span>
<span class="t" style="top:678px;font-size:11px;line-height:13px;color:#000;-webkit-text-stroke:0.200px #000;right:494px;">0.9793</span>
<span class="t" style="top:678px;font-size:11px;line-height:13px;color:#000;-webkit-text-stroke:0.200px #000;right:419px;">0.0000</span>
<span class="t" style="top:678px;font-size:11px;line-height:13px;color:#000;-webkit-text-stroke:0.200px #000;right:344px;">0.0000</span>
<span class="t" style="top:678px;font-size:11px;line-height:13px;color:#000;-webkit-text-stroke:0.200px #000;right:268px;">0.9657</span>
<span class="t" style="top:678px;font-size:11px;line-height:13px;color:#000;-webkit-text-stroke:0.200px #000;right:193px;">0.00</span>
<span class="t" style="top:678px;font-size:11px;line-height:13px;color:#000;-webkit-text-stroke:0.200px #000;right:118px;">-4.20</span>
<span class="t" style="top:678px;font-size:11px;line-height:13px;color:#000;-webkit-text-stroke:0.200px #000;right:31px;">-136</span>
<div style="left:20px;top:695px;width:985px;height:19px;background:#ebebeb;"></div>
<div style="left:20px;top:714px;width:985px;height:1px;background:#c4c4c4;"></div>
<svg style="left:23px;top:697px" width="15" height="16" viewBox="0 0 15 16"><path d="M1.500 1.500q0-1 1-1h5.500l3 3v8q0 1-1 1h-7.500q-1 0-1-1z" fill="#fff" stroke="#6a6a6a"/><path d="M8 .5v3h3" fill="none" stroke="#6a6a6a"/><circle cx="10.500" cy="11.500" r="3" fill="#4aa8f0" stroke="#1a78d8" stroke-width=".8"/><circle cx="9.800" cy="10.700" r="1" fill="#fff" opacity=".5"/></svg>
<span class="t" style="top:698px;font-size:11px;line-height:13px;color:#000;-webkit-text-stroke:0.200px #000;letter-spacing:-0.182px;left:45px;">26357186</span>
<span class="t" style="top:698px;font-size:11px;line-height:13px;color:#000;-webkit-text-stroke:0.200px #000;right:755px;">2010.10.05 09:18</span>
<span class="t" style="top:698px;font-size:11px;line-height:13px;color:#000;-webkit-text-stroke:0.200px #000;right:687px;">buy</span>
<span class="t" style="top:698px;font-size:11px;line-height:13px;color:#000;-webkit-text-stroke:0.200px #000;right:635px;">0.10</span>
<span class="t" style="top:698px;font-size:11px;line-height:13px;color:#000;-webkit-text-stroke:0.200px #000;right:569px;">usdchf</span>
<span class="t" style="top:698px;font-size:11px;line-height:13px;color:#000;-webkit-text-stroke:0.200px #000;right:494px;">0.9700</span>
<span class="t" style="top:698px;font-size:11px;line-height:13px;color:#000;-webkit-text-stroke:0.200px #000;right:419px;">0.0000</span>
<span class="t" style="top:698px;font-size:11px;line-height:13px;color:#000;-webkit-text-stroke:0.200px #000;right:344px;">0.0000</span>
<span class="t" style="top:698px;font-size:11px;line-height:13px;color:#000;-webkit-text-stroke:0.200px #000;right:268px;">0.9657</span>
<span class="t" style="top:698px;font-size:11px;line-height:13px;color:#000;-webkit-text-stroke:0.200px #000;right:193px;">0.00</span>
<span class="t" style="top:698px;font-size:11px;line-height:13px;color:#000;-webkit-text-stroke:0.200px #000;right:118px;">0.00</span>
<span class="t" style="top:698px;font-size:11px;line-height:13px;color:#000;-webkit-text-stroke:0.200px #000;right:31px;">-43</span>
<div style="left:115px;top:594px;width:1px;height:120px;background:#c4c4c4;"></div>
<div style="left:281px;top:594px;width:1px;height:120px;background:#c4c4c4;"></div>
<div style="left:347px;top:594px;width:1px;height:120px;background:#c4c4c4;"></div>
<div style="left:399px;top:594px;width:1px;height:120px;background:#c4c4c4;"></div>
<div style="left:467px;top:594px;width:1px;height:120px;background:#c4c4c4;"></div>
<div style="left:542px;top:594px;width:1px;height:120px;background:#c4c4c4;"></div>
<div style="left:617px;top:594px;width:1px;height:120px;background:#c4c4c4;"></div>
<div style="left:692px;top:594px;width:1px;height:120px;background:#c4c4c4;"></div>
<div style="left:766px;top:594px;width:1px;height:120px;background:#c4c4c4;"></div>
<div style="left:841px;top:594px;width:1px;height:120px;background:#c4c4c4;"></div>
<div style="left:916px;top:594px;width:1px;height:120px;background:#c4c4c4;"></div>
<div style="left:20px;top:715px;width:985px;height:5px;background:#c6c6c6;"></div>
<div style="left:23px;top:717px;width:15px;height:3px;overflow:hidden;"><svg style="left:0;top:0" width="15" height="16" viewBox="0 0 15 16"><path d="M1.500 1.500q0-1 1-1h5.500l3 3v8q0 1-1 1h-7.500q-1 0-1-1z" fill="#fff" stroke="#6a6a6a"/></svg></div>
<div style="left:20px;top:720px;width:1005px;height:1px;background:#000;"></div>
<div style="left:1006px;top:574px;width:17px;height:146px;background:linear-gradient(90deg,#f2f0ea,#fdfdfb);"></div>
<div style="left:1006px;top:575px;width:17px;height:17px;box-sizing:border-box;border:1px solid #fff;border-radius:3px;background:linear-gradient(135deg,#d2defd,#b4c8fa);box-shadow:inset 0 0 0 1px #a9bcf2;"></div>
<svg style="left:1006px;top:575px" width="17" height="17" viewBox="0 0 17 17"><path d="M4.500 10l4-4 4 4" stroke="#4d6185" stroke-width="2" fill="none"/></svg>
<div style="left:1006px;top:702px;width:17px;height:17px;box-sizing:border-box;border:1px solid #fff;border-radius:3px;background:linear-gradient(135deg,#d2defd,#b4c8fa);box-shadow:inset 0 0 0 1px #a9bcf2;"></div>
<svg style="left:1006px;top:702px" width="17" height="17" viewBox="0 0 17 17"><path d="M4.500 6.500l4 4 4-4" stroke="#4d6185" stroke-width="2" fill="none"/></svg>
<div style="left:1006px;top:594px;width:17px;height:91px;box-sizing:border-box;border:1px solid #fff;border-radius:3px;background:linear-gradient(90deg,#cddbfd,#bccdfa 60%,#b0c2f5);box-shadow:inset 0 0 0 1px #a9bcf2;"></div>
<div style="left:1011px;top:635px;width:7px;height:1px;background:#eef3fe;"></div>
<div style="left:1012px;top:636px;width:7px;height:1px;background:#8ea4dc;"></div>
<div style="left:1011px;top:637px;width:7px;height:1px;background:#eef3fe;"></div>
<div style="left:1012px;top:638px;width:7px;height:1px;background:#8ea4dc;"></div>
<div style="left:1011px;top:639px;width:7px;height:1px;background:#eef3fe;"></div>
<div style="left:1012px;top:640px;width:7px;height:1px;background:#8ea4dc;"></div>
<div style="left:1011px;top:641px;width:7px;height:1px;background:#eef3fe;"></div>
<div style="left:1012px;top:642px;width:7px;height:1px;background:#8ea4dc;"></div>
<div style="left:1025px;top:570px;width:1px;height:171px;background:#fbfaf5;"></div>
<div style="left:22px;top:720px;width:80px;height:18px;background:#fff;box-sizing:border-box;border:1px solid #000;border-top:none;box-shadow:1px 1px 0 #6a675c;"></div>
<span class="t" style="top:723px;font-size:11px;line-height:13px;color:#000;-webkit-text-stroke:0.200px #000;letter-spacing:-0.261px;left:32px;">Operaciones</span>
<span class="t" style="top:723px;font-size:11px;line-height:13px;color:#808080;-webkit-text-stroke:0.200px #808080;letter-spacing:-0.180px;left:112px;">Historial de cuentas</span>
<span class="t" style="top:723px;font-size:11px;line-height:13px;color:#808080;-webkit-text-stroke:0.200px #808080;letter-spacing:-0.367px;left:226px;">Avisos</span>
<span class="t" style="top:723px;font-size:11px;line-height:13px;color:#808080;-webkit-text-stroke:0.200px #808080;letter-spacing:-0.641px;left:277px;">Buzón</span>
<span class="t" style="top:723px;font-size:11px;line-height:13px;color:#808080;-webkit-text-stroke:0.200px #808080;letter-spacing:-0.456px;left:326px;">Diario</span>
<div style="left:216px;top:724px;width:1px;height:12px;background:#7a776a;"></div>
<div style="left:267px;top:724px;width:1px;height:12px;background:#7a776a;"></div>
<div style="left:316px;top:724px;width:1px;height:12px;background:#7a776a;"></div>
<div style="left:363px;top:724px;width:1px;height:12px;background:#7a776a;"></div>
<div style="left:4px;top:741px;width:1023px;height:1px;background:#fff;"></div>
<div style="left:4px;top:743px;width:1023px;height:1px;background:#bab7a6;"></div>
<span class="t" style="top:750px;font-size:11px;line-height:13px;color:#000;-webkit-text-stroke:0.200px #000;letter-spacing:-0.069px;left:5px;">Para obtener ayuda, pulse F1</span>
<span class="t" style="top:750px;font-size:11px;line-height:13px;color:#000;-webkit-text-stroke:0.200px #000;letter-spacing:0.020px;left:209px;">Default</span>
<div style="left:205px;top:747px;width:1px;height:17px;background:#bab7a6;"></div>
<div style="left:206px;top:747px;width:1px;height:17px;background:#fff;"></div>
<div style="left:336px;top:747px;width:1px;height:17px;background:#bab7a6;"></div>
<div style="left:337px;top:747px;width:1px;height:17px;background:#fff;"></div>
<div style="left:455px;top:747px;width:1px;height:17px;background:#bab7a6;"></div>
<div style="left:456px;top:747px;width:1px;height:17px;background:#fff;"></div>
<div style="left:540px;top:747px;width:1px;height:17px;background:#bab7a6;"></div>
<div style="left:541px;top:747px;width:1px;height:17px;background:#fff;"></div>
<div style="left:622px;top:747px;width:1px;height:17px;background:#bab7a6;"></div>
<div style="left:623px;top:747px;width:1px;height:17px;background:#fff;"></div>
<div style="left:703px;top:747px;width:1px;height:17px;background:#bab7a6;"></div>
<div style="left:704px;top:747px;width:1px;height:17px;background:#fff;"></div>
<div style="left:786px;top:747px;width:1px;height:17px;background:#bab7a6;"></div>
<div style="left:787px;top:747px;width:1px;height:17px;background:#fff;"></div>
<div style="left:866px;top:747px;width:1px;height:17px;background:#bab7a6;"></div>
<div style="left:867px;top:747px;width:1px;height:17px;background:#fff;"></div>
<div style="left:872px;top:750px;width:2px;height:12px;background:#0c3c58;"></div>
<div style="left:872px;top:750px;width:2px;height:9px;background:#6b8a1c;"></div>
<div style="left:872px;top:760px;width:2px;height:2px;background:#1c5a9a;"></div>
<div style="left:875px;top:750px;width:2px;height:12px;background:#0c3c58;"></div>
<div style="left:875px;top:750px;width:2px;height:8px;background:#6b8a1c;"></div>
<div style="left:875px;top:760px;width:2px;height:2px;background:#1c5a9a;"></div>
<div style="left:878px;top:750px;width:2px;height:12px;background:#0c3c58;"></div>
<div style="left:878px;top:750px;width:2px;height:7px;background:#6b8a1c;"></div>
<div style="left:878px;top:760px;width:2px;height:2px;background:#1c5a9a;"></div>
<div style="left:881px;top:750px;width:2px;height:12px;background:#0c3c58;"></div>
<div style="left:881px;top:750px;width:2px;height:6px;background:#6b8a1c;"></div>
<div style="left:884px;top:750px;width:2px;height:12px;background:#0c3c58;"></div>
<div style="left:884px;top:750px;width:2px;height:4px;background:#6b8a1c;"></div>
<div style="left:887px;top:750px;width:2px;height:12px;background:#0c3c58;"></div>
<div style="left:887px;top:750px;width:2px;height:3px;background:#6b8a1c;"></div>
<div style="left:890px;top:750px;width:2px;height:12px;background:#0c3c58;"></div>
<div style="left:890px;top:750px;width:2px;height:2px;background:#6b8a1c;"></div>
<div style="left:893px;top:750px;width:2px;height:12px;background:#0c3c58;"></div>
<div style="left:893px;top:750px;width:2px;height:1px;background:#6b8a1c;"></div>
<span class="t" style="top:750px;font-size:11px;line-height:13px;color:#000;-webkit-text-stroke:0.200px #000;letter-spacing:-0.156px;left:924px;">73/2 kb</span>
<svg style="left:1013px;top:751px" width="14" height="14" viewBox="0 0 14 14"><path d="M13.500 1l-12.500 12.500M13.500 5l-8.500 8.500M13.500 9l-4.500 4.500" stroke="#a09c88" stroke-width="1.300"/><path d="M13.500 2l-11.500 11.500M13.500 6l-7.500 7.500M13.500 10l-3.500 3.500" stroke="#fff" stroke-width="1"/></svg>
<div style="left:3px;top:765px;width:1024px;height:4px;background:linear-gradient(#0a50e0,#2a6cf0);"></div>
<div style="left:3px;top:767px;width:108px;height:2px;background:#3a8a3a;"></div>
<div style="left:946px;top:767px;width:81px;height:2px;background:#1a90e8;"></div>
</div></body></html>
